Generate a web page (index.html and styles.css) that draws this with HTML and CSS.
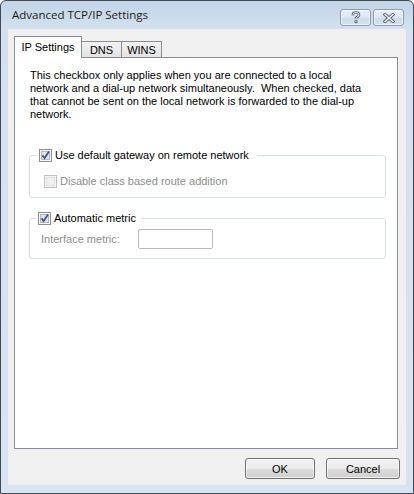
FILE: index.html
```html
<!DOCTYPE html>
<html>
<head>
<meta charset="utf-8">
<link rel="stylesheet" href="styles.css">
</head>
<body>
<div class="window">
  <div class="titlebar">
    <span class="title">Advanced TCP/IP Settings</span>
    <div class="caption-buttons">
      <span class="cbtn">
        <svg width="12" height="13" viewBox="0 0 12 13">
          <path d="M3 4.5 L3 3.5 Q3 1.5 6 1.5 Q9 1.5 9 3.8 Q9 5.4 7 6.2 L6 6.8 L6 8" fill="none" stroke="#56657a" stroke-width="2.6" stroke-linejoin="round"/>
          <rect x="4.6" y="9.3" width="2.8" height="2.8" fill="#56657a"/>
          <path d="M3 4.5 L3 3.5 Q3 1.5 6 1.5 Q9 1.5 9 3.8 Q9 5.4 7 6.2 L6 6.8 L6 8" fill="none" stroke="#ffffff" stroke-width="0.9" stroke-linejoin="round"/>
          <rect x="5.5" y="10.2" width="1" height="1" fill="#ffffff"/>
        </svg>
      </span>
      <span class="cbtn">
        <svg width="12" height="10" viewBox="0 0 12 10">
          <path d="M2 1.5 L10 8.5 M10 1.5 L2 8.5" fill="none" stroke="#56657a" stroke-width="3.2" stroke-linecap="square"/>
          <path d="M2 1.5 L10 8.5 M10 1.5 L2 8.5" fill="none" stroke="#ffffff" stroke-width="1.3" stroke-linecap="square"/>
        </svg>
      </span>
    </div>
  </div>
  <div class="client">
    <div class="tabs">
      <span class="tab active">IP Settings</span>
      <span class="tab dns">DNS</span>
      <span class="tab wins">WINS</span>
    </div>
    <div class="panel">
      <p class="desc">This checkbox only applies when you are connected to a local<br>network and a dial-up network simultaneously.&nbsp; When checked, data<br>that cannot be sent on the local network is forwarded to the dial-up<br>network.</p>
      <fieldset class="group g1">
        <legend>
          <svg class="check" width="13" height="13" viewBox="0 0 13 13">
            <rect x="0.5" y="0.5" width="12" height="12" fill="#f6f6f6" stroke="#8e8f8f"/>
            <rect x="2.5" y="2.5" width="8" height="8" fill="#dfe3e8" stroke="#b3b8bf"/>
            <path d="M3.4 6.4 L5.6 9 L10 2.6" fill="none" stroke="#3d5289" stroke-width="1.7"/>
          </svg>
          <span>Use default gateway on remote network</span>
        </legend>
        <div class="row disabled">
          <svg class="check" width="13" height="13" viewBox="0 0 13 13">
            <rect x="0.5" y="0.5" width="12" height="12" fill="#f4f4f4" stroke="#c2c2c2"/>
            <rect x="2.5" y="2.5" width="8" height="8" fill="#f0f0f0" stroke="#e2e2e2"/>
          </svg>
          <span>Disable class based route addition</span>
        </div>
      </fieldset>
      <fieldset class="group g2">
        <legend>
          <svg class="check" width="13" height="13" viewBox="0 0 13 13">
            <rect x="0.5" y="0.5" width="12" height="12" fill="#f6f6f6" stroke="#8e8f8f"/>
            <rect x="2.5" y="2.5" width="8" height="8" fill="#dfe3e8" stroke="#b3b8bf"/>
            <path d="M3.4 6.4 L5.6 9 L10 2.6" fill="none" stroke="#3d5289" stroke-width="1.7"/>
          </svg>
          <span>Automatic metric</span>
        </legend>
        <div class="row metric">
          <span class="lbl">Interface metric:</span>
          <span class="input"></span>
        </div>
      </fieldset>
    </div>
    <div class="buttons">
      <button class="btn ok">OK</button>
      <button class="btn cancel">Cancel</button>
    </div>
  </div>
</div>
</body>
</html>
```
FILE: styles.css
```css
html, body {
  margin: 0;
  padding: 0;
  background: #ffffff;
}

.window {
  box-sizing: border-box;
  width: 414px;
  height: 494px;
  border: 1px solid #424a55;
  border-radius: 6px 6px 0 0;
  background: linear-gradient(to bottom, #c3d4e7 0px, #d3e0ef 28px, #d8e4f2 100%);
  display: flex;
  flex-direction: column;
  font-family: "Liberation Sans", Arial, sans-serif;
  font-size: 11px;
  color: #000;
}

.titlebar {
  height: 28px;
  flex: none;
  display: flex;
  align-items: flex-start;
  padding: 0 9px 0 11px;
}

.title {
  font-family: "Open Sans", "Noto Sans", sans-serif;
  font-size: 11.5px;
  line-height: 16px;
  margin-top: 6px;
  color: #1b1b1b;
}

.caption-buttons {
  margin-left: auto;
  margin-top: 8px;
  display: flex;
  gap: 2px;
}

.cbtn {
  box-sizing: border-box;
  width: 31px;
  height: 17px;
  border: 1px solid #8c9cb1;
  border-radius: 3px;
  background: linear-gradient(to bottom, #e9eff7 0%, #dbe5f1 50%, #cfdbea 51%, #d5e0ed 100%);
  box-shadow: inset 0 0 0 1px rgba(255,255,255,0.55);
  display: flex;
  align-items: center;
  justify-content: center;
}

.client {
  flex: 1;
  margin: 0 7px 8px 7px;
  background: #f0f0f0;
  padding: 7px 6px 0 6px;
  display: flex;
  flex-direction: column;
}

.tabs {
  display: flex;
  align-items: flex-end;
  height: 21px;
  position: relative;
  z-index: 1;
}

.tab {
  box-sizing: border-box;
  border: 1px solid #898c95;
  border-bottom: none;
  display: flex;
  align-items: center;
  justify-content: center;
  height: 16px;
  background: linear-gradient(to bottom, #f3f3f3, #e3e3e3);
  margin-left: -1px;
}

.tab.active {
  width: 68px;
  background: #ffffff;
  margin-left: 0;
  margin-bottom: -1px;
  padding-bottom: 1px;
  height: 22px;
}

.tab.dns {
  width: 41px;
}

.tab.wins {
  width: 41px;
}

.panel {
  box-sizing: border-box;
  height: 392px;
  margin-right: 2px;
  background: #ffffff;
  border: 1px solid #898c95;
  padding: 11px 12px 0 15px;
}

.desc {
  margin: 0;
  line-height: 13px;
}

.group {
  margin: 0;
  border: 1px solid #d5dfe5;
  border-radius: 3px;
  padding: 0;
  margin-left: -1px;
  width: 357px;
  box-sizing: border-box;
}

.g1 {
  margin-top: 28px;
  padding: 13px 0 9px 14px;
}

.g2 {
  margin-top: 14px;
  padding: 4px 0 9px 11px;
}

.group legend {
  display: flex;
  align-items: center;
  height: 13px;
  line-height: 13px;
  padding: 0 8px 0 2px;
}

.g1 legend {
  margin-left: -7px;
}

.g2 legend {
  margin-left: -5px;
  padding-right: 5px;
}

.check {
  display: block;
  flex: none;
  margin-right: 3px;
}

.row {
  display: flex;
  align-items: center;
  line-height: 13px;
}

.disabled {
  color: #8d8d8d;
}

.metric {
  color: #8d8d8d;
}

.lbl {
  width: 97px;
}

.input {
  box-sizing: border-box;
  width: 75px;
  height: 20px;
  border: 1px solid #b8bcc2;
  border-radius: 2px;
  background: #ffffff;
}

.buttons {
  display: flex;
  justify-content: flex-end;
  gap: 11px;
  margin-top: 9px;
}

.btn {
  box-sizing: border-box;
  height: 21px;
  border: 1px solid #707070;
  border-radius: 3px;
  background: linear-gradient(to bottom, #f2f2f2 0%, #ebebeb 50%, #dddddd 51%, #cfcfcf 100%);
  box-shadow: inset 0 0 0 1px rgba(255,255,255,0.7);
  font-family: "Liberation Sans", Arial, sans-serif;
  font-size: 11px;
  color: #000;
  padding: 0;
}

.ok {
  width: 70px;
}

.cancel {
  width: 74px;
}
```
